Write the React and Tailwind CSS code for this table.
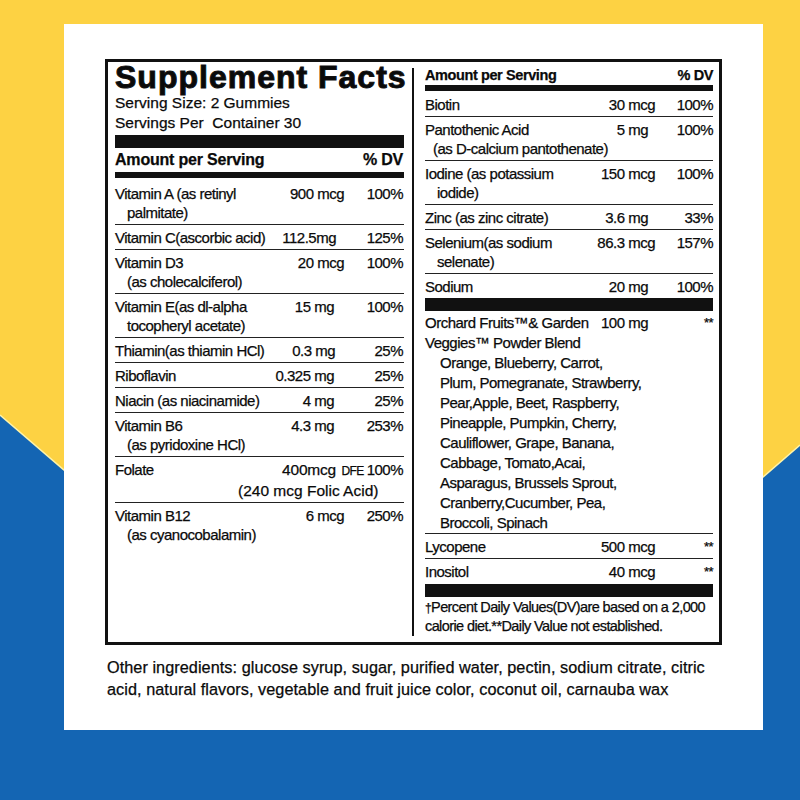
import React from "react";

const FONT = "font-['Liberation_Sans',Arial,sans-serif]";

const leftRows = [
  { name: ["Vitamin A (as retinyl", "palmitate)"], amt: "900 mcg", pr: "pr-0", dv: "100%", pad: "pt-[6px] pb-[2px]" },
  { name: ["Vitamin C(ascorbic acid)"], amt: "112.5mg", pr: "pr-[8px]", dv: "125%" },
  { name: ["Vitamin D3", "(as cholecalciferol)"], amt: "20 mcg", pr: "pr-0", dv: "100%" },
  { name: ["Vitamin E(as dl-alpha", "tocopheryl acetate)"], amt: "15 mg", pr: "pr-[10px]", dv: "100%" },
  { name: ["Thiamin(as thiamin HCl)"], amt: "0.3 mg", pr: "pr-[9px]", dv: "25%" },
  { name: ["Riboflavin"], amt: "0.325 mg", pr: "pr-[10px]", dv: "25%" },
  { name: ["Niacin (as niacinamide)"], amt: "4 mg", pr: "pr-[10px]", dv: "25%" },
  { name: ["Vitamin B6", "(as pyridoxine HCl)"], amt: "4.3 mg", pr: "pr-[10px]", dv: "253%" },
];

const rightRows = [
  { name: ["Biotin"], amt: "30 mcg", pr: "pr-0", dv: "100%", pad: "pt-[4px] pb-[2px]" },
  { name: ["Pantothenic Acid", "(as D-calcium pantothenate)"], ind: "pl-[8px]", amt: "5 mg", pr: "pr-[7px]", dv: "100%" },
  { name: ["Iodine (as potassium", "iodide)"], ind: "pl-[12px]", amt: "150 mcg", pr: "pr-0", dv: "100%" },
  { name: ["Zinc (as zinc citrate)"], amt: "3.6 mg", pr: "pr-[7px]", dv: "33%" },
  { name: ["Selenium(as sodium", "selenate)"], ind: "pl-[12px]", amt: "86.3 mcg", pr: "pr-0", dv: "157%" },
  { name: ["Sodium"], amt: "20 mg", pr: "pr-[7px]", dv: "100%", noBorder: true },
];

const blend = [
  "Orange, Blueberry, Carrot,",
  "Plum, Pomegranate, Strawberry,",
  "Pear,Apple, Beet, Raspberry,",
  "Pineapple, Pumpkin, Cherry,",
  "Cauliflower, Grape, Banana,",
  "Cabbage, Tomato,Acai,",
  "Asparagus, Brussels Sprout,",
  "Cranberry,Cucumber, Pea,",
  "Broccoli, Spinach",
];

function LeftRow({ r }) {
  return (
    <div className={`flex items-start border-b border-[#222] ${r.pad || "pt-[3px] pb-[2px]"}`}>
      <div className="flex-1 min-w-0 whitespace-nowrap">
        {r.name.map((n, i) => (
          <div key={i} className={i > 0 ? "pl-[12px]" : ""}>{n}</div>
        ))}
      </div>
      <div className={`w-[80px] shrink-0 text-right whitespace-nowrap ${r.pr}`}>{r.amt}</div>
      <div className="w-[60px] shrink-0 text-right whitespace-nowrap pr-[1px]">{r.dv}</div>
    </div>
  );
}

function RightRow({ r }) {
  return (
    <div className={`flex items-start ${r.noBorder ? "" : "border-b border-[#222]"} ${r.pad || "pt-[3px] pb-[2px]"}`}>
      <div className="flex-1 min-w-0 whitespace-nowrap">
        {r.name.map((n, i) => (
          <div key={i} className={i > 0 ? r.ind : ""}>{n}</div>
        ))}
      </div>
      <div className={`w-[95px] shrink-0 text-right whitespace-nowrap ${r.pr}`}>{r.amt}</div>
      <div className="w-[58px] shrink-0 text-right whitespace-nowrap">{r.dv}</div>
    </div>
  );
}

export default function App() {
  return (
    <div className={`relative w-[800px] h-[800px] overflow-hidden ${FONT} text-[#0a0a0a] [-webkit-text-stroke:0.25px_#0a0a0a]`}>
      <svg className="absolute inset-0" width="800" height="800" viewBox="0 0 800 800">
        <rect x="0" y="0" width="800" height="800" fill="#FDD243" />
        <path d="M0,415 L64,470 C250,545 560,545 763,477 L800,445 L800,800 L0,800 Z" fill="#1465B3" />
        <path d="M0,415 L64,470 C250,545 560,545 763,477 L800,445" fill="none" stroke="#FFF3A8" strokeWidth="1.5" />
      </svg>

      <div className="relative pt-[24px] pl-[64px]">
        <div className="w-[699px] h-[706px] bg-white pt-[35px] pl-[41px]">
          {/* Label box */}
          <div className="w-[617px] h-[586px] border-[3px] border-[#111] flex">
            {/* Left column */}
            <div className="ml-[7px] w-[289px] shrink-0">
              <div className="mt-[-1px] text-[32px] leading-[32px] font-bold tracking-[1px] whitespace-nowrap [-webkit-text-stroke:1px_#111]">
                Supplement Facts
              </div>
              <div className="text-[15.5px] leading-[20px] whitespace-nowrap">
                <div>Serving Size: 2 Gummies</div>
                <div>Servings Per&nbsp; Container 30</div>
              </div>
              <div className="mt-[2px] h-[13px] bg-[#111]" />
              <div className="mt-[2px] flex justify-between text-[16px] leading-[20px] font-bold tracking-[-0.2px]">
                <span>Amount per Serving</span>
                <span className="pr-[1px]">% DV</span>
              </div>
              <div className="mt-[2px] h-[6px] bg-[#111]" />
              <div className="text-[15px] leading-[19px] tracking-[-0.5px]">
                {leftRows.map((r, i) => (
                  <LeftRow key={i} r={r} />
                ))}
                {/* Folate */}
                <div className="border-b border-[#222] pt-[3px] pb-[2px]">
                  <div className="flex items-start">
                    <div className="flex-1 min-w-0">Folate</div>
                    <div className="w-[80px] shrink-0 text-right whitespace-nowrap pr-[8px] text-[15.5px] tracking-[-0.2px]">400mcg</div>
                    <div className="w-[60px] shrink-0 flex justify-end items-baseline whitespace-nowrap pr-[1px]">
                      <span className="text-[12px] tracking-[-0.6px] mr-[3px]">DFE</span>
                      <span>100%</span>
                    </div>
                  </div>
                  <div className="pl-[123px] whitespace-nowrap text-[15.5px] tracking-normal">(240 mcg Folic Acid)</div>
                </div>
                {/* B12 */}
                <div className="flex items-start pt-[3px] pb-[2px]">
                  <div className="flex-1 min-w-0 whitespace-nowrap">
                    <div>Vitamin B12</div>
                    <div className="pl-[12px]">(as cyanocobalamin)</div>
                  </div>
                  <div className="w-[80px] shrink-0 text-right whitespace-nowrap">6 mcg</div>
                  <div className="w-[60px] shrink-0 text-right whitespace-nowrap pr-[1px]">250%</div>
                </div>
              </div>
            </div>

            {/* Divider */}
            <div className="ml-[8px] mt-[6px] mb-[6px] w-[2px] shrink-0 bg-[#111]" />

            {/* Right column */}
            <div className="ml-[11px] w-[288px] shrink-0">
              <div className="mt-[3px] flex justify-between text-[14.5px] leading-[20px] font-bold tracking-[-0.4px]">
                <span>Amount per Serving</span>
                <span>% DV</span>
              </div>
              <div className="h-[6px] bg-[#111]" />
              <div className="text-[15px] leading-[19px] tracking-[-0.5px]">
                {rightRows.map((r, i) => (
                  <RightRow key={i} r={r} />
                ))}
              </div>
              <div className="h-[13px] bg-[#111]" />
              <div className="pt-[2px] border-b border-[#222] text-[15px] leading-[20px] tracking-[-0.5px] whitespace-nowrap">
                <div className="flex items-start">
                  <div className="flex-1 min-w-0">Orchard Fruits™&amp; Garden</div>
                  <div className="w-[95px] shrink-0 text-right pr-[7px]">100 mg</div>
                  <div className="w-[58px] shrink-0 text-right text-[13px]">**</div>
                </div>
                <div>Veggies™ Powder Blend</div>
                {blend.map((b, i) => (
                  <div key={i} className="pl-[15px]">{b}</div>
                ))}
              </div>
              <div className="text-[15px] leading-[19px] tracking-[-0.5px]">
                <div className="flex items-start border-b border-[#222] pt-[3px] pb-[2px]">
                  <div className="flex-1 min-w-0">Lycopene</div>
                  <div className="w-[95px] shrink-0 text-right">500 mcg</div>
                  <div className="w-[58px] shrink-0 text-right text-[13px]">**</div>
                </div>
                <div className="flex items-start pt-[3px] pb-[2px]">
                  <div className="flex-1 min-w-0">Inositol</div>
                  <div className="w-[95px] shrink-0 text-right">40 mcg</div>
                  <div className="w-[58px] shrink-0 text-right text-[13px]">**</div>
                </div>
              </div>
              <div className="mt-[1px] h-[13px] bg-[#111]" />
              <div className="pt-[1px] text-[14.5px] leading-[18px] tracking-[-0.6px] whitespace-nowrap">
                <div><span className="text-[12px]">†</span>Percent Daily Values(DV)are based on a 2,000</div>
                <div>calorie diet.**Daily Value not established.</div>
              </div>
            </div>
          </div>

          {/* Other ingredients */}
          <div className="mt-[11px] ml-[2px] text-[16.25px] leading-[22px] tracking-[0.05px] whitespace-nowrap">
            <div>Other ingredients: glucose syrup, sugar, purified water, pectin, sodium citrate, citric</div>
            <div>acid, natural flavors, vegetable and fruit juice color, coconut oil, carnauba wax</div>
          </div>
        </div>
      </div>
    </div>
  );
}
